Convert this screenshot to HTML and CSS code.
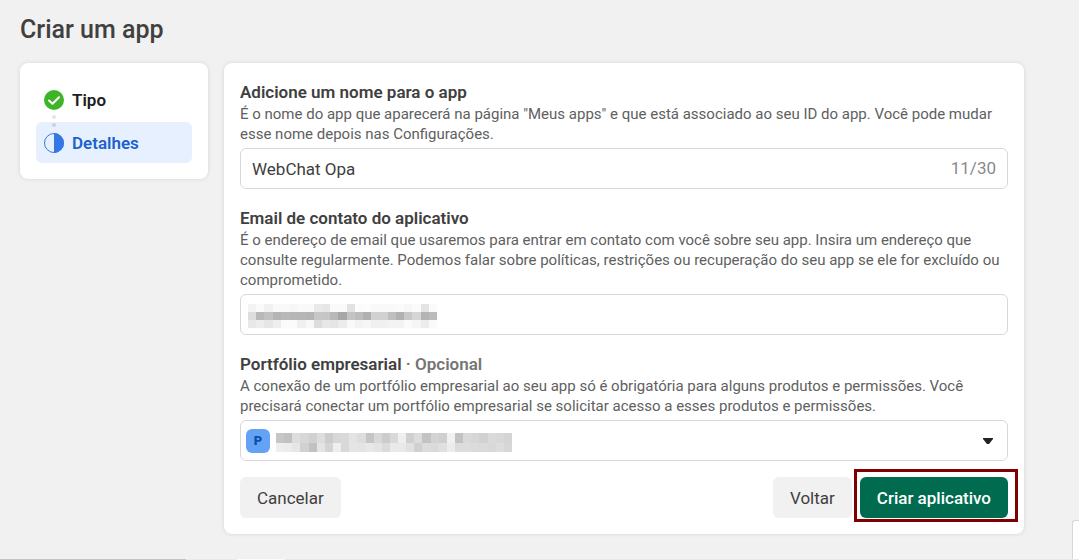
FILE: index.html
```html
<!DOCTYPE html>
<html lang="pt-BR">
<head>
    <meta charset="UTF-8">
    <meta name="viewport" content="width=device-width, initial-scale=1.0">
    <title>Criar um app</title>
    <link rel="stylesheet" href="styles.css">
</head>
<body>
    <div class="page">
        <h1 class="page-title">Criar um app</h1>

        <div class="layout">
            <nav class="steps card">
                <div class="step">
                    <svg class="step-icon" viewBox="0 0 20 20" aria-hidden="true">
                        <circle cx="10" cy="10" r="10" fill="#3eb528"/>
                        <path d="M5 10.5l3.5 3.3 6.5-6.6" fill="none" stroke="#fff" stroke-width="2" stroke-linecap="round" stroke-linejoin="round"/>
                    </svg>
                    <span>Tipo</span>
                </div>
                <div class="step step-active">
                    <svg class="step-icon" viewBox="0 0 20 20" aria-hidden="true">
                        <circle cx="10" cy="10" r="9.5" fill="none" stroke="#3578e5"/>
                        <path d="M10 0a10 10 0 0 1 0 20z" fill="#3578e5"/>
                    </svg>
                    <span>Detalhes</span>
                </div>
            </nav>

            <form class="details card">
                <div class="field">
                    <label class="field-label" for="app-name">Adicione um nome para o app</label>
                    <p class="field-help">É o nome do app que aparecerá na página "Meus apps" e que está associado ao seu ID do app. Você pode mudar esse nome depois nas Configurações.</p>
                    <div class="control">
                        <input class="control-input" id="app-name" type="text" value="WebChat Opa" maxlength="30">
                        <span class="counter">11/30</span>
                    </div>
                </div>

                <div class="field">
                    <label class="field-label" for="app-email">Email de contato do aplicativo</label>
                    <p class="field-help">É o endereço de email que usaremos para entrar em contato com você sobre seu app. Insira um endereço que consulte regularmente. Podemos falar sobre políticas, restrições ou recuperação do seu app se ele for excluído ou comprometido.</p>
                    <div class="control">
                        <input class="control-input" id="app-email" type="email">
                        <svg class="mask mask-email" id="mask-email" viewBox="0 0 23 3" preserveAspectRatio="none" aria-hidden="true"></svg>
                    </div>
                </div>

                <div class="field">
                    <label class="field-label" for="portfolio">Portfólio empresarial <span class="optional">· Opcional</span></label>
                    <p class="field-help">A conexão de um portfólio empresarial ao seu app só é obrigatória para alguns produtos e permissões. Você precisará conectar um portfólio empresarial se solicitar acesso a esses produtos e permissões.</p>
                    <div class="control">
                        <select class="control-input" id="portfolio">
                            <option></option>
                        </select>
                        <span class="avatar">P</span>
                        <svg class="mask mask-portfolio" id="mask-portfolio" viewBox="0 0 29 2" preserveAspectRatio="none" aria-hidden="true"></svg>
                        <svg class="caret" viewBox="0 0 12 6" aria-hidden="true">
                            <path d="M1 0h10v1L7 6H5L1 1z" fill="#222"/>
                        </svg>
                    </div>
                </div>

                <div class="actions">
                    <button class="btn" type="button">Cancelar</button>
                    <button class="btn btn-back" type="button">Voltar</button>
                    <div class="submit">
                        <button class="btn btn-primary" type="submit">Criar aplicativo</button>
                        <span class="highlight"></span>
                    </div>
                </div>
            </form>
        </div>
    </div>

    <div class="corner-panel"></div>
    <div class="status-edge"></div>

    <script src="script.js"></script>
</body>
</html>
```
FILE: styles.css
```css
* {
    box-sizing: border-box;
}

body {
    margin: 0;
    background-color: #f1f1f1;
    color: #404040;
    font-family: Roboto, "Liberation Sans", sans-serif;
}

.page {
    padding: 16px 20px;
}

.page-title {
    margin: 0 0 19px;
    font-size: 25px;
    line-height: 28px;
    font-weight: 500;
}

.layout {
    display: flex;
    align-items: flex-start;
    gap: 16px;
}

.card {
    background-color: #fff;
    border-radius: 8px;
    box-shadow: 0 0 4px rgba(0, 0, 0, 0.12);
}

/* Steps */
.steps {
    flex: 0 0 188px;
    padding: 16px;
}

.step {
    position: relative;
    display: flex;
    align-items: center;
    gap: 8px;
    height: 41px;
    padding: 0 8px;
    border-radius: 6px;
    color: #1c1e21;
    font-size: 17px;
    font-weight: 600;
}

.step-active {
    margin-top: 2px;
    background-color: #e7f0ff;
    color: #1b62cc;
}

/* dotted line between the two step icons */
.step-active::before,
.step-active::after {
    content: "";
    position: absolute;
    left: 16px;
    top: -7px;
    width: 4px;
    height: 4px;
    border-radius: 50%;
    background-color: #e2e4e7;
}

.step-active::after {
    top: 1px;
    background-color: #c9d3e2;
}

.step-icon {
    width: 20px;
    height: 20px;
}

/* Form */
.details {
    flex: 0 1 800px;
    padding: 19px 16px 16px;
}

.field {
    margin-bottom: 19px;
}

.field:nth-last-child(2) {
    margin-bottom: 16px;
}

.field-label {
    display: block;
    margin-bottom: 2px;
    font-size: 17px;
    line-height: 20px;
    font-weight: 600;
}

.optional {
    color: #757575;
}

.field-help {
    margin: 0 0 4px;
    color: #606060;
    font-size: 15px;
    line-height: 20px;
}

.control {
    position: relative;
}

.control-input {
    display: block;
    width: 100%;
    height: 41px;
    padding: 0 11px;
    border: 1px solid #d8d8d8;
    border-radius: 6px;
    background-color: #fff;
    color: #404040;
    font: 17px Roboto, "Liberation Sans", sans-serif;
    appearance: none;
}

.counter {
    position: absolute;
    right: 12px;
    top: 0;
    line-height: 41px;
    font-size: 17px;
    color: #8a8a8a;
}

.mask {
    position: absolute;
    pointer-events: none;
}

.mask-email {
    left: 8px;
    top: 10px;
    width: 189px;
    height: 24px;
}

.mask-portfolio {
    left: 36px;
    top: 13px;
    width: 236px;
    height: 19px;
}

.avatar {
    position: absolute;
    left: 6px;
    top: 9px;
    width: 24px;
    height: 24px;
    border-radius: 6px;
    background-color: #64a2f5;
    color: #0f4fa8;
    font-size: 13px;
    line-height: 24px;
    font-weight: 900;
    text-align: center;
    pointer-events: none;
}

.caret {
    position: absolute;
    right: 14px;
    top: 18px;
    width: 12px;
    height: 6px;
    pointer-events: none;
}

/* Buttons */
.actions {
    display: flex;
    gap: 8px;
}

.btn {
    height: 41px;
    padding: 0 17px;
    border: none;
    border-radius: 6px;
    background-color: #f1f1f1;
    color: #404040;
    font: 17px Roboto, "Liberation Sans", sans-serif;
    cursor: pointer;
}

.btn-back {
    margin-left: auto;
}

.submit {
    position: relative;
}

.btn-primary {
    background-color: #006b4e;
    color: #fff;
    font-weight: 500;
}

.highlight {
    position: absolute;
    inset: -8px -10px -4px -6px;
    border: 3px solid #800000;
    pointer-events: none;
}

/* Window edges */
.corner-panel {
    position: fixed;
    right: 0;
    bottom: 1px;
    width: 7px;
    height: 39px;
    border: 1px solid #d8d8d8;
    border-width: 1px 0 0 1px;
    border-radius: 3px 0 0 0;
    background-color: #fff;
}

.status-edge {
    position: fixed;
    left: 0;
    right: 0;
    bottom: 0;
    height: 1px;
    background: linear-gradient(to right, #c4c4c4 186px, #e9e9e9 186px 237px, #fafafa 237px 285px, #e9e9e9 285px);
}
```
FILE: script.js
```js
// Grey levels of the pixelated values, one hex pair per cell
var masks = {
    'mask-email': [
        'f3 fa f1 f9 f9 f7 f9 f9 e9 e6 fa fa e2 fb fc f9 f9 f9 fb f7 fb e3 fa',
        'dd b8 c1 b4 b9 b7 b6 b4 c7 c6 b8 a7 c4 bc b0 d1 d1 bf b1 c8 d6 b4 bb',
        'e8 ed e6 ee fb fb f0 f8 dc e7 e5 ec f9 f3 f6 f0 f0 f3 f3 fb f5 ec fa'
    ],
    'mask-portfolio': [
        'c6 c1 de d7 d1 dd cc d7 d9 e3 dd c5 d8 cc d9 ef cf dc c3 d3 cf f1 c2 d9 d7 d1 da d8 d5',
        'ee ec e6 d1 c1 e4 d4 ee d8 e4 e4 e8 e4 db e9 e9 e1 d0 dc da e0 ec dc dd db da d9 dd d7'
    ]
};

Object.keys(masks).forEach(function (id) {
    var svg = document.getElementById(id);
    masks[id].forEach(function (row, y) {
        row.split(' ').forEach(function (level, x) {
            var cell = document.createElementNS('http://www.w3.org/2000/svg', 'rect');
            cell.setAttribute('x', x);
            cell.setAttribute('y', y);
            cell.setAttribute('width', 1);
            cell.setAttribute('height', 1);
            cell.setAttribute('fill', '#' + level + level + level);
            cell.setAttribute('shape-rendering', 'crispEdges');
            svg.appendChild(cell);
        });
    });
});
```
